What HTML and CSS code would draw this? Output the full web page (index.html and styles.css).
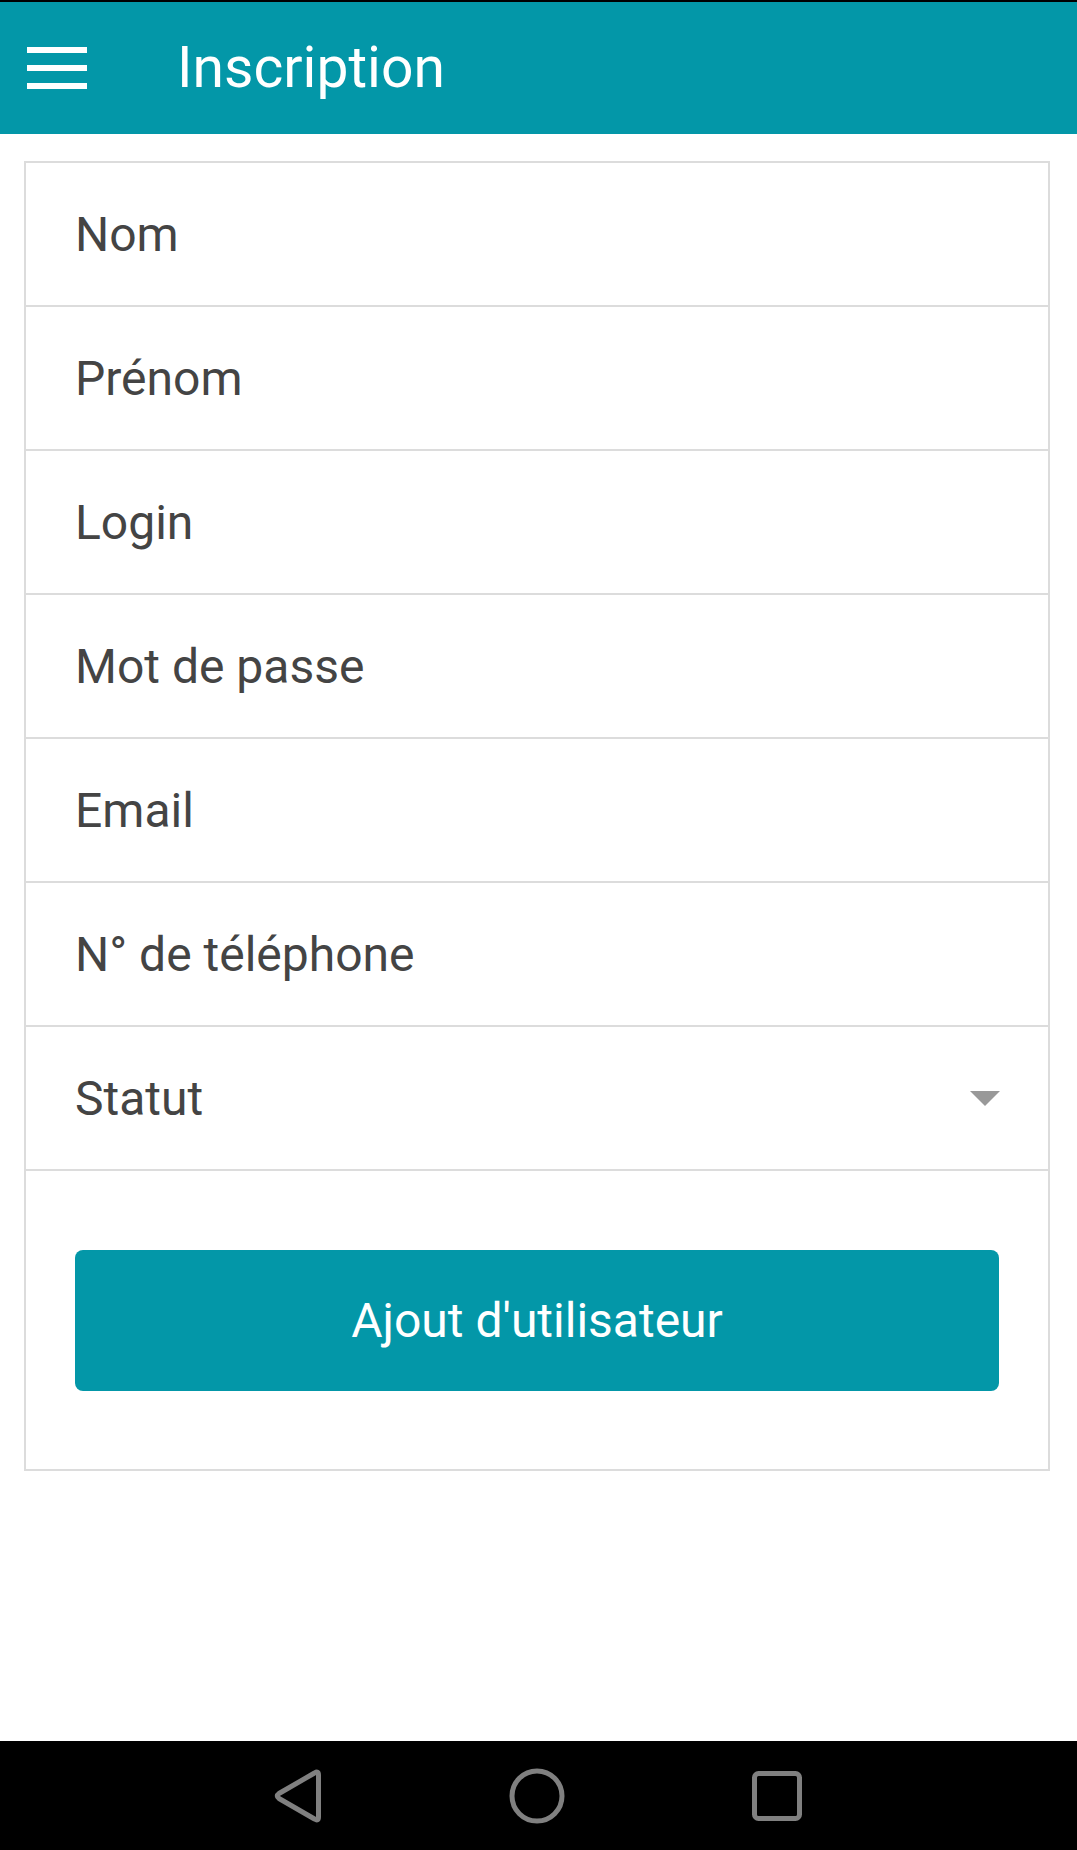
FILE: index.html
```html
<!DOCTYPE html>
<html lang="fr">
<head>
<meta charset="utf-8">
<title>Inscription</title>
<link rel="stylesheet" href="styles.css">
</head>
<body>
<div class="screen">
  <div class="statusbar"></div>
  <header class="toolbar">
    <button class="menu" aria-label="Menu">
      <span class="bar"></span>
      <span class="bar"></span>
      <span class="bar"></span>
    </button>
    <h1 class="title">Inscription</h1>
  </header>
  <main class="content">
    <form class="card">
      <div class="row"><span class="label">Nom</span></div>
      <div class="row"><span class="label">Prénom</span></div>
      <div class="row"><span class="label">Login</span></div>
      <div class="row"><span class="label">Mot de passe</span></div>
      <div class="row"><span class="label">Email</span></div>
      <div class="row"><span class="label">N° de téléphone</span></div>
      <div class="row select"><span class="label">Statut</span>
        <svg class="caret" width="30" height="15" viewBox="0 0 30 15"><polygon points="0,0 30,0 15,15" fill="#999"/></svg>
      </div>
      <div class="actions">
        <button type="button" class="submit">Ajout d'utilisateur</button>
      </div>
    </form>
  </main>
  <nav class="navbar">
    <svg class="nav-icon" width="60" height="60" viewBox="0 0 60 60">
      <path d="M51.5 9 L51.5 51 Q51.5 55.5 47.5 53 L12 32.5 Q8.5 30 12 27.5 L47.5 7 Q51.5 4.5 51.5 9 Z" fill="none" stroke="#808080" stroke-width="5" stroke-linejoin="round"/>
    </svg>
    <svg class="nav-icon" width="60" height="60" viewBox="0 0 60 60">
      <circle cx="30" cy="30" r="25" fill="none" stroke="#808080" stroke-width="5"/>
    </svg>
    <svg class="nav-icon" width="60" height="60" viewBox="0 0 60 60">
      <rect x="7.5" y="7.5" width="45" height="45" rx="4" fill="none" stroke="#808080" stroke-width="5"/>
    </svg>
  </nav>
</div>
</body>
</html>
```
FILE: styles.css
```css
* { box-sizing: border-box; }
html, body { margin: 0; padding: 0; background: #fff; }
body { font-family: Roboto, "Noto Sans", "Liberation Sans", sans-serif; }

.screen {
  width: 1077px;
  height: 1850px;
  display: flex;
  flex-direction: column;
  overflow: hidden;
}

.statusbar { height: 2px; background: #000; flex: none; }

.toolbar {
  height: 132px;
  flex: none;
  background: #0397a8;
  display: flex;
  align-items: center;
  padding-left: 27px;
}

.menu {
  width: 60px;
  height: 42px;
  padding: 0;
  border: 0;
  background: none;
  display: flex;
  flex-direction: column;
  justify-content: space-between;
}
.menu .bar { display: block; width: 60px; height: 6px; background: #fff; }

.title {
  margin: 0 0 0 90px;
  font-size: 57px;
  font-weight: 400;
  color: #fff;
  line-height: 1;
  position: relative;
  top: -1px;
}

.content {
  flex: 1;
  padding: 27px 27px 0 24px;
}

.card {
  border: 2px solid #dcdcdc;
  margin: 0;
}

.row {
  height: 144px;
  border-bottom: 2px solid #dcdcdc;
  display: flex;
  align-items: center;
  padding: 0 48px 0 49px;
  color: #444;
  font-size: 48px;
}
.row .label { flex: 1; }
.row.select .caret { flex: none; }

.actions {
  padding: 79px 49px 78px 49px;
}

.submit {
  display: block;
  width: 100%;
  height: 141px;
  border: 0;
  border-radius: 8px;
  background: #0397a8;
  color: #fff;
  font-family: Roboto, "Noto Sans", "Liberation Sans", sans-serif;
  font-size: 48px;
  font-weight: 400;
}

.navbar {
  height: 109px;
  flex: none;
  background: #000;
  display: flex;
  align-items: center;
  justify-content: center;
  gap: 180px;
  padding-right: 4px;
}
.nav-icon { display: block; }
```
